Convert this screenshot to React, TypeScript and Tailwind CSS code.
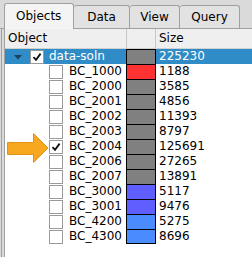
import React from "react";

const rows = [
  { name: "BC_1000", color: "#ff3333", size: "1188" },
  { name: "BC_2000", color: "#808080", size: "3585" },
  { name: "BC_2001", color: "#808080", size: "4856" },
  { name: "BC_2002", color: "#808080", size: "11393" },
  { name: "BC_2003", color: "#808080", size: "8797" },
  { name: "BC_2004", color: "#808080", size: "125691", checked: true },
  { name: "BC_2006", color: "#808080", size: "27265" },
  { name: "BC_2007", color: "#808080", size: "13891" },
  { name: "BC_3000", color: "#5f5fff", size: "5117" },
  { name: "BC_3001", color: "#5f5fff", size: "9476" },
  { name: "BC_4200", color: "#4a8cff", size: "5275" },
  { name: "BC_4300", color: "#4a8cff", size: "8696" },
];

function Check({ checked }: { checked?: boolean }) {
  return (
    <div className="w-[14px] h-[14px] border border-[#9a9a9a] bg-white flex items-center justify-center">
      {checked && (
        <svg width="10" height="10" viewBox="0 0 10 10">
          <path d="M1.5 5.2 L4 7.8 L8.6 1.6" stroke="#111" strokeWidth="1.8" fill="none" />
        </svg>
      )}
    </div>
  );
}

export default function App() {
  return (
    <div
      className="w-[252px] h-[257px] bg-[#dadada] relative overflow-hidden text-[12px] leading-[15px] text-black"
      style={{ fontFamily: '"DejaVu Sans", sans-serif' }}
    >
      {/* tab bar */}
      <div className="h-[29px] flex items-end pl-[4px] border-b border-[#a0a0a0]">
        <div className="w-[70px] h-[26px] -mb-px bg-[#f4f4f4] border border-b-0 border-[#a0a0a0] rounded-t-[3px] flex items-center pl-[11px] pb-[1px] relative z-10">
          Objects
        </div>
        <div className="w-[56px] h-[23px] bg-[#e2e2e2] border border-l-0 border-b-0 border-[#a0a0a0] rounded-t-[3px] flex items-center justify-center">
          Data
        </div>
        <div className="w-[50px] h-[23px] bg-[#e2e2e2] border border-l-0 border-b-0 border-[#a0a0a0] rounded-t-[3px] flex items-center justify-center">
          View
        </div>
        <div className="w-[60px] h-[23px] bg-[#e2e2e2] border border-l-0 border-b-0 border-[#a0a0a0] rounded-t-[3px] flex items-center justify-center">
          Query
        </div>
      </div>
      {/* body */}
      <div className="flex h-[228px]">
        <div className="w-[4px] flex">
          <div className="w-[1px]" />
          <div className="w-[1px] bg-[#a0a0a0]" />
        </div>
        <div className="flex-1 border-l border-[#a0a0a0] bg-white">
          {/* header */}
          <div className="h-[20px] flex bg-[#efefef] border-b border-[#d0d0d0]">
            <div className="w-[122px] pl-[3px] pt-[2px] border-r border-[#c8c8c8]">Object</div>
            <div className="w-[29px] border-r border-[#c8c8c8]" />
            <div className="flex-1 pl-[3px] pt-[2px]">Size</div>
          </div>
          {/* parent row */}
          <div className="h-[15px] flex bg-[#308cc6] text-white">
            <div className="w-[122px] flex items-center">
              <div className="w-[25px] flex justify-center pt-[1px]">
                <svg width="8" height="5" viewBox="0 0 8 5">
                  <path d="M0 0 L8 0 L4 4.5 Z" fill="#1e3f62" />
                </svg>
              </div>
              <Check checked />
              <span className="ml-[5px]">data-soln</span>
            </div>
            <div className="w-[30px] border border-b-0 border-black bg-[#808080] -ml-px" />
            <div className="flex-1 pl-[3px]">225230</div>
          </div>
          {rows.map((r, i) => (
            <div key={r.name} className="h-[15px] flex">
              <div className="w-[122px] flex items-center">
                <div className="w-[44px]" />
                <Check checked={r.checked} />
                <span className="ml-[6px]">{r.name}</span>
              </div>
              <div
                className={`w-[30px] border border-black -ml-px ${i === rows.length - 1 ? "" : "border-b-0"}`}
                style={{ backgroundColor: r.color }}
              />
              <div className="flex-1 pl-[3px]">{r.size}</div>
            </div>
          ))}
        </div>
      </div>
      {/* arrow */}
      <svg className="absolute left-0 top-[130px]" width="52" height="36" viewBox="0 0 52 36">
        <path
          d="M7.5 12.5 L33.5 12.5 L33.5 3.5 L48 18 L33.5 32.5 L33.5 24.5 L7.5 24.5 Z"
          fill="#f7a81e"
          stroke="#e0921a"
          strokeWidth="1"
        />
      </svg>
    </div>
  );
}
